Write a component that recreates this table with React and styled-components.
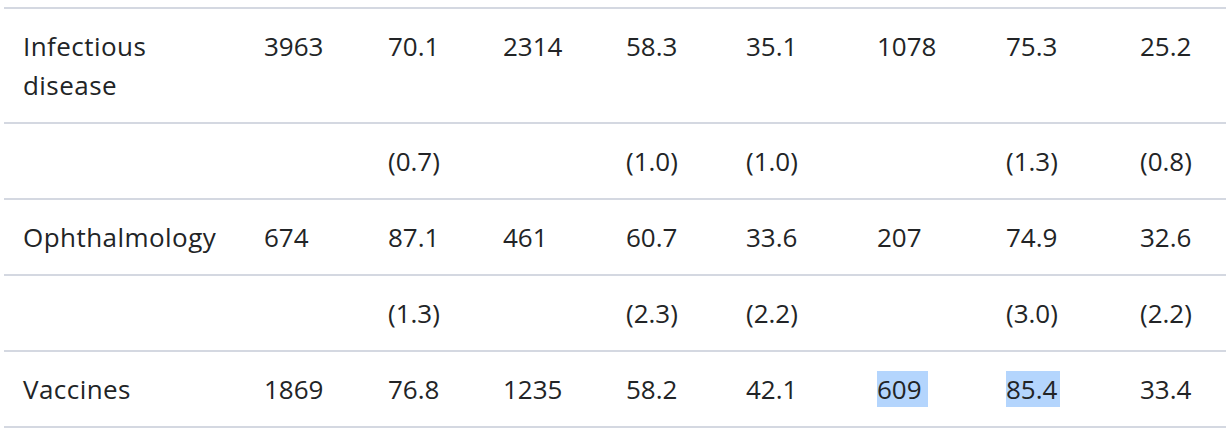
import React from 'react';
import styled, { createGlobalStyle } from 'styled-components';

const GlobalStyle = createGlobalStyle`
  html, body {
    margin: 0;
    padding: 0;
    background: #ffffff;
    overflow: hidden;
  }
`;

const Page = styled.div`
  padding: 7px 0 0 4px;
  width: 1226px;
  box-sizing: border-box;
`;

const Table = styled.table`
  border-collapse: collapse;
  table-layout: fixed;
  width: 1240px;
  font-family: "Open Sans", "Liberation Sans", sans-serif;
  font-size: 26px;
  line-height: 39px;
  color: #222426;
  border-top: 2px solid #d4d8e1;
`;

const Row = styled.tr`
  border-bottom: 2px solid #d4d8e1;
`;

const Cell = styled.td`
  vertical-align: top;
  padding: 18px 12px 17px 19px;
  white-space: nowrap;
`;

// first column holds the category name, it wraps
const LabelCell = styled(Cell)`
  padding-right: 22px;
  white-space: normal;
  letter-spacing: 0.45px;
`;

const Selected = styled.span`
  background: #b4d5fd;
  padding-right: ${(props) => props.$trail || 0}px;
`;

const widths = [241, 124, 115, 123, 120, 131, 129, 134, 123];

const rows = [
  ['Infectious disease', '3963', '70.1', '2314', '58.3', '35.1', '1078', '75.3', '25.2'],
  ['', '', '(0.7)', '', '(1.0)', '(1.0)', '', '(1.3)', '(0.8)'],
  ['Ophthalmology', '674', '87.1', '461', '60.7', '33.6', '207', '74.9', '32.6'],
  ['', '', '(1.3)', '', '(2.3)', '(2.2)', '', '(3.0)', '(2.2)'],
  ['Vaccines', '1869', '76.8', '1235', '58.2', '42.1', { sel: '609', trail: 6 }, { sel: '85.4', trail: 3 }, '33.4'],
];

const renderValue = (value) => {
  if (value && typeof value === 'object') {
    return <Selected $trail={value.trail}>{value.sel}</Selected>;
  }
  return value;
};

const App = () => (
  <Page>
    <GlobalStyle />
    <Table>
      <colgroup>
        {widths.map((w, i) => (
          <col key={i} style={{ width: w }} />
        ))}
      </colgroup>
      <tbody>
        {rows.map((row, r) => (
          <Row key={r}>
            {row.map((value, c) =>
              c === 0 ? (
                <LabelCell key={c}>{value}</LabelCell>
              ) : (
                <Cell key={c}>{renderValue(value)}</Cell>
              )
            )}
          </Row>
        ))}
      </tbody>
    </Table>
  </Page>
);

export default App;
